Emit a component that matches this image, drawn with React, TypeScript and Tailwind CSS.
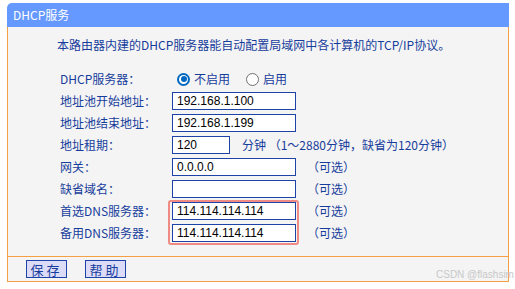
const cjk = "font-['Noto_Sans_CJK_SC','Noto_Sans',sans-serif]";

function Radio({ checked, label }: { checked?: boolean; label: string }) {
  return (
    <label className="flex items-center">
      {checked ? (
        <span className="ml-[5px] mr-[4px] flex h-[13px] w-[13px] items-center justify-center rounded-full bg-[#0067c0]">
          <span className="flex h-[9px] w-[9px] items-center justify-center rounded-full bg-white">
            <span className="h-[6px] w-[6px] rounded-full bg-[#0067c0]" />
          </span>
        </span>
      ) : (
        <span className="ml-[5px] mr-[4px] h-[13px] w-[13px] rounded-full border border-[#707070] bg-white" />
      )}
      <span>{label}</span>
    </label>
  );
}

function Field({ value, w = "w-[124px]" }: { value?: string; w?: string }) {
  return (
    <div
      className={`${w} flex h-[18px] items-center border border-[#1d43a6] bg-white px-[4px] font-['Liberation_Sans',sans-serif] text-[12px] text-black`}
    >
      {value}
    </div>
  );
}

function Optional() {
  return <span className="ml-[11px]">（可选）</span>;
}

const rows: { label: string; content: React.ReactNode }[] = [
  {
    label: "DHCP服务器：",
    content: (
      <div className="flex items-center">
        <Radio checked label="不启用" />
        <span className="w-[11px]" />
        <Radio label="启用" />
      </div>
    ),
  },
  { label: "地址池开始地址：", content: <Field value="192.168.1.100" /> },
  { label: "地址池结束地址：", content: <Field value="192.168.1.199" /> },
  {
    label: "地址租期：",
    content: (
      <>
        <Field value="120" w="w-[58px]" />
        <span className="ml-[12px]">分钟 （1～2880分钟，缺省为120分钟）</span>
      </>
    ),
  },
  {
    label: "网关：",
    content: (
      <>
        <Field value="0.0.0.0" />
        <Optional />
      </>
    ),
  },
  {
    label: "缺省域名：",
    content: (
      <>
        <Field />
        <Optional />
      </>
    ),
  },
];

const dnsRows = [
  { label: "首选DNS服务器：", value: "114.114.114.114" },
  { label: "备用DNS服务器：", value: "114.114.114.114" },
];

export default function App() {
  return (
    <div className={`relative h-[289px] w-[515px] overflow-hidden bg-white ${cjk} text-[12px] text-[#173d9c]`}>
      <div className="ml-[7px] mt-[3px] w-[502px]">
        <div className="flex h-[24px] items-center rounded-tl-[5px] bg-[#6699ff] pl-[6px] text-white">
          DHCP服务
        </div>
        <div className="border-x border-b border-[#f7a043] bg-[#f4f4f4]">
          <div className="pl-[49px] pt-[10px] leading-[16px]">
            本路由器内建的DHCP服务器能自动配置局域网中各计算机的TCP/IP协议。
          </div>
          <div className="mt-[15px] pb-[12px] pl-[52px]">
            {rows.map((r) => (
              <div key={r.label} className="flex h-[22px] items-center">
                <span className="w-[112px]">{r.label}</span>
                {r.content}
              </div>
            ))}
            <div className="relative">
              {dnsRows.map((r) => (
                <div key={r.label} className="flex h-[22px] items-center">
                  <span className="w-[112px]">{r.label}</span>
                  <Field value={r.value} />
                  <Optional />
                </div>
              ))}
              <div className="pointer-events-none absolute left-[108px] top-0 h-[45px] w-[131px] rounded-[3px] border-2 border-[#f08a84]" />
            </div>
          </div>
          <div className="flex h-[25px] items-center gap-[18px] border-t border-[#f7a043] pl-[18px]">
            <button className="h-[18px] w-[41px] border border-[#1d43a6] bg-[#dcdcf8] text-[13px] leading-none tracking-[3px] text-[#173d9c]">
              保存
            </button>
            <button className="h-[18px] w-[41px] border border-[#1d43a6] bg-[#dcdcf8] text-[13px] leading-none tracking-[3px] text-[#173d9c]">
              帮助
            </button>
          </div>
        </div>
      </div>
      <span className="absolute left-[436px] top-[269px] font-['Liberation_Sans',sans-serif] text-[10px] leading-[12px] whitespace-nowrap text-[#c8c8c8]">
        CSDN @flashsim
      </span>
    </div>
  );
}
